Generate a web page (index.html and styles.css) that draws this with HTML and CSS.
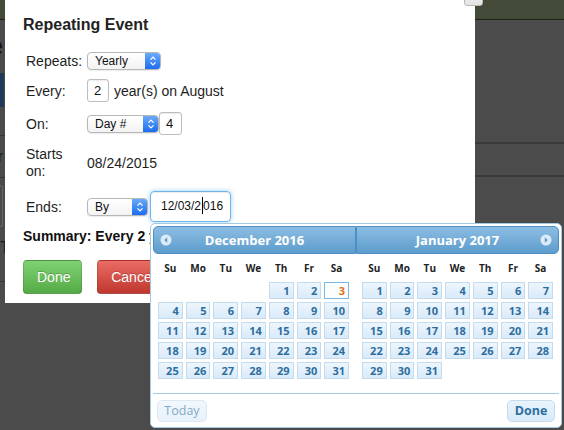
FILE: index.html
```html
<!DOCTYPE html>
<html>
<head>
<meta charset="utf-8">
<title>Repeating Event</title>
<link rel="stylesheet" href="styles.css">
</head>
<body>
<div class="page">
  <div class="lside">
    <div class="bar"></div>
    <div class="l-title"><span>Schedule</span></div>
    <div class="l-blue"></div>
    <div class="l-r1"></div>
    <div class="l-r2"><span>Filter</span></div>
    <div class="l-box"></div>
    <div class="l-r3"><span>To</span></div>
  </div>
  <div class="rside">
    <div class="bar"></div>
    <div class="r-r1"></div>
    <div class="r-r2"></div>
  </div>
</div>

<div class="dialog">
  <h2 class="title">Repeating Event</h2>
  <div class="form">
    <div class="row r1">
      <span class="lbl">Repeats:</span>
      <div class="sel w-repeats"><span class="txt">Yearly</span><span class="arr"><svg width="8" height="12" viewBox="0 0 8 12"><path d="M1.5 4.6 L4 2.1 L6.5 4.6 M1.5 7.4 L4 9.9 L6.5 7.4" fill="none" stroke="#fff" stroke-width="1.3"/></svg></span></div>
    </div>
    <div class="row r2">
      <span class="lbl">Every:</span>
      <div class="num">2</div>
      <span class="after">year(s) on August</span>
    </div>
    <div class="row r3">
      <span class="lbl">On:</span>
      <div class="sel w-on"><span class="txt">Day #</span><span class="arr"><svg width="8" height="12" viewBox="0 0 8 12"><path d="M1.5 4.6 L4 2.1 L6.5 4.6 M1.5 7.4 L4 9.9 L6.5 7.4" fill="none" stroke="#fff" stroke-width="1.3"/></svg></span></div>
      <div class="num num4">4</div>
    </div>
    <div class="row r4">
      <span class="lbl two">Starts<br>on:</span>
      <span class="val">08/24/2015</span>
    </div>
    <div class="row r5">
      <span class="lbl">Ends:</span>
      <div class="sel w-ends"><span class="txt">By</span><span class="arr"><svg width="8" height="12" viewBox="0 0 8 12"><path d="M1.5 4.6 L4 2.1 L6.5 4.6 M1.5 7.4 L4 9.9 L6.5 7.4" fill="none" stroke="#fff" stroke-width="1.3"/></svg></span></div>
      <div class="date-input">12/03/2<span class="caret"></span>016</div>
    </div>
  </div>
  <div class="summary">Summary: Every 2 years on August 4, until 12/03/2016</div>
  <div class="buttons">
    <button class="btn done-btn">Done</button>
    <button class="btn cancel-btn">Cancel</button>
  </div>
</div>

<div class="close-btn"><span>×</span></div>

<div class="dp">
  <div class="groups">
    <div class="group first">
      <div class="dp-head">
        <span class="nav prev"><svg width="12" height="12" viewBox="0 0 12 12"><circle cx="6" cy="6" r="5.5" fill="#dcebf7"/><path d="M7.2 3.3 L4.2 6 L7.2 8.7 Z" fill="#5b9bcc"/></svg></span>
        <span class="month">December 2016</span>
        <span class="nav"></span>
      </div>
      <div class="dow"><span>Su</span><span>Mo</span><span>Tu</span><span>We</span><span>Th</span><span>Fr</span><span>Sa</span></div>
      <div class="days">
        <span class="e"></span><span class="e"></span><span class="e"></span><span class="e"></span>
        <span class="d">1</span><span class="d">2</span><span class="d active">3</span>
        <span class="d">4</span><span class="d">5</span><span class="d">6</span><span class="d">7</span><span class="d">8</span><span class="d">9</span><span class="d">10</span>
        <span class="d">11</span><span class="d">12</span><span class="d">13</span><span class="d">14</span><span class="d">15</span><span class="d">16</span><span class="d">17</span>
        <span class="d">18</span><span class="d">19</span><span class="d">20</span><span class="d">21</span><span class="d">22</span><span class="d">23</span><span class="d">24</span>
        <span class="d">25</span><span class="d">26</span><span class="d">27</span><span class="d">28</span><span class="d">29</span><span class="d">30</span><span class="d">31</span>
      </div>
    </div>
    <div class="group last">
      <div class="dp-head">
        <span class="nav"></span>
        <span class="month">January 2017</span>
        <span class="nav next"><svg width="12" height="12" viewBox="0 0 12 12"><circle cx="6" cy="6" r="5.5" fill="#dcebf7"/><path d="M4.8 3.3 L7.8 6 L4.8 8.7 Z" fill="#5b9bcc"/></svg></span>
      </div>
      <div class="dow"><span>Su</span><span>Mo</span><span>Tu</span><span>We</span><span>Th</span><span>Fr</span><span>Sa</span></div>
      <div class="days">
        <span class="d">1</span><span class="d">2</span><span class="d">3</span><span class="d">4</span><span class="d">5</span><span class="d">6</span><span class="d">7</span>
        <span class="d">8</span><span class="d">9</span><span class="d">10</span><span class="d">11</span><span class="d">12</span><span class="d">13</span><span class="d">14</span>
        <span class="d">15</span><span class="d">16</span><span class="d">17</span><span class="d">18</span><span class="d">19</span><span class="d">20</span><span class="d">21</span>
        <span class="d">22</span><span class="d">23</span><span class="d">24</span><span class="d">25</span><span class="d">26</span><span class="d">27</span><span class="d">28</span>
        <span class="d">29</span><span class="d">30</span><span class="d">31</span>
      </div>
    </div>
  </div>
  <div class="pane">
    <button class="dbtn today">Today</button>
    <button class="dbtn dp-done">Done</button>
  </div>
</div>
</body>
</html>
```

FILE: styles.css
```css
* { box-sizing: border-box; margin: 0; padding: 0; }
html, body { width: 564px; height: 430px; overflow: hidden; }
body {
  background: #4b4b4b;
  font-family: "Liberation Sans", Arial, sans-serif;
  position: relative;
  color: #1e1e1e;
}

/* background page (dimmed) */
.page { display: flex; height: 430px; }
.lside { width: 5px; overflow: hidden; display: flex; flex-direction: column; flex: none; }
.rside { flex: 1; display: flex; flex-direction: column; }
.bar { height: 20px; flex: none; background: #434a37; border-bottom: 1px solid #1e2314; }
.l-title {
  height: 53px; padding-top: 11px; padding-right: 2px;
  display: flex; justify-content: flex-end;
  font-weight: bold; font-size: 26px; line-height: 30px; color: #161616; white-space: nowrap;
}
.l-blue { height: 34px; width: 4px; background: #213a58; }
.l-r1 { height: 29px; border-bottom: 1px solid #363636; }
.l-r2 {
  height: 42px; border-bottom: 1px solid #363636;
  display: flex; justify-content: flex-end; align-items: center; padding-right: 2px;
  font-size: 16px; color: #1c1c1c; white-space: nowrap;
}
.l-box { margin-top: 7px; height: 42px; width: 3px; border: 1px solid #666; border-left: none; border-radius: 0 4px 4px 0; }
.l-r3 {
  height: 55px; border-bottom: 1px solid #363636;
  padding-top: 12px; font-size: 16px; color: #1c1c1c; white-space: nowrap;
}
.r-r1 { height: 124px; border-bottom: 2px solid #3a3a3a; }
.r-r2 { height: 33px; border-bottom: 2px solid #3a3a3a; }

/* dialog */
.dialog {
  position: absolute; left: 5px; top: 0; width: 470px; height: 303px;
  background: #fff; padding: 16px 0 0 18px;
}
.title { font-size: 16px; line-height: 18px; font-weight: bold; color: #222; }
.form { margin-left: 3px; }
.row { display: flex; align-items: center; }
.r1 { margin-top: 18px; height: 18px; }
.r2 { margin-top: 9px; height: 23px; }
.r3 { margin-top: 10px; height: 23px; }
.r4 { margin-top: 11px; height: 34px; }
.r5 { margin-top: 10px; height: 33px; }
.lbl { width: 61px; flex: none; font-size: 14px; line-height: 16px; }
.lbl.two { line-height: 17px; }
.val, .after { font-size: 14px; line-height: 16px; }
.after { margin-left: 5px; }

.sel {
  display: flex; height: 18px; flex: none;
  border: 1px solid #b7b7b7; border-radius: 4px;
  background: linear-gradient(#ffffff, #f3f3f3);
  box-shadow: 0 1px 1px rgba(0,0,0,0.08);
  overflow: hidden; font-size: 12px; color: #111;
}
.sel .txt { flex: 1; padding-left: 7px; line-height: 16px; }
.sel .arr {
  width: 15px; flex: none; display: flex; align-items: center; justify-content: center;
  background: linear-gradient(#6aaaf8, #1c6cf0);
}
.w-repeats { width: 74px; }
.w-on { width: 72px; }
.w-ends { width: 61px; }

.num {
  width: 22px; height: 23px; flex: none;
  border: 1px solid #bdbdbd; border-radius: 3px;
  box-shadow: inset 0 1px 1px rgba(0,0,0,0.08);
  font-size: 13px; line-height: 21px; padding-left: 6px; color: #111;
}
.num4 { width: 23px; }

.date-input {
  margin-left: 2px; width: 81px; height: 31px; flex: none;
  border: 1px solid rgba(82,168,236,0.85); border-radius: 4px;
  box-shadow: inset 0 1px 1px rgba(0,0,0,0.075), 0 0 5px rgba(82,168,236,0.55);
  font-size: 12px; line-height: 29px; padding-left: 10px; color: #111; white-space: nowrap;
}
.caret { display: inline-block; width: 1px; height: 17px; background: #000; vertical-align: -4px; margin: 0 0 0 1px; }

.summary {
  margin-top: 5px; font-size: 14px; line-height: 16px; font-weight: bold; color: #111; white-space: nowrap;
}
.buttons { margin-top: 16px; display: flex; gap: 15px; }
.btn {
  height: 34px; padding: 0 13px; border-radius: 4px;
  font-family: "Liberation Sans", Arial, sans-serif; font-size: 14px; color: #fff;
  text-shadow: 0 -1px 0 rgba(0,0,0,0.2);
  border: 1px solid rgba(0,0,0,0.12); border-bottom-color: rgba(0,0,0,0.25);
}
.done-btn { width: 59px; background: linear-gradient(#7fd172, #55ab47); }
.cancel-btn { width: 72px; background: linear-gradient(#ea6c65, #bf372e); }

.close-btn {
  position: absolute; left: 464px; top: -13px; width: 19px; height: 19px;
  background: linear-gradient(#f6f6f6, #e4e4e4); border: 1px solid #b9b9b9; border-radius: 3px;
  display: flex; justify-content: center; font-size: 12px; line-height: 12px; color: #666;
}

/* datepicker */
.dp {
  position: absolute; left: 150px; top: 223px; width: 412px; height: 205px; z-index: 2;
  background: #fff; border: 1px solid #a6c9e2; border-radius: 5px; padding: 2px;
  font-family: "Open Sans", "DejaVu Sans", sans-serif;
  display: flex; flex-direction: column;
}
.groups { display: flex; }
.group { width: 203px; }
.dp-head {
  height: 28px; display: grid; grid-template-columns: 1fr auto 1fr; align-items: center;
  background: linear-gradient(#8cbde3, #5d9ccc);
  border: 1px solid #4c8fc7; color: #fff; font-weight: bold; font-size: 13px;
}
.first .dp-head { border-radius: 5px 0 0 5px; }
.last .dp-head { border-radius: 0 5px 5px 0; }
.nav { display: flex; height: 12px; }
.nav.prev { padding-left: 6px; }
.nav.next { justify-content: flex-end; padding-right: 6px; }
.month { line-height: 18px; }

.dow, .days { display: grid; grid-template-columns: repeat(7, 1fr); column-gap: 3px; }
.first .dow, .first .days { margin-left: 5px; margin-right: 7px; }
.last .dow, .last .days { margin-left: 6px; margin-right: 6px; }
.dow { margin-top: 7px; height: 14px; font-size: 10px; line-height: 14px; font-weight: bold; color: #222; text-align: center; }
.days { margin-top: 7px; row-gap: 3px; grid-auto-rows: 17px; }
.d {
  border: 1px solid #c5dbec; background: linear-gradient(#edf6fd, #d9eafa);
  color: #2e6e9e; font-weight: bold; font-size: 11px; line-height: 15px;
  text-align: right; padding-right: 3px;
}
.d.active { background: #fbfdfe; border-color: #79b7e7; color: #e17009; }

.pane {
  margin-top: 14px; border-top: 1px solid #a6c9e2;
  display: flex; justify-content: space-between; padding: 6px 4px 0;
}
.dbtn {
  height: 22px; border: 1px solid #c5dbec; border-radius: 5px;
  background: linear-gradient(#e9f3fc, #d9eafa);
  color: #2e6e9e; font-family: "Open Sans", "DejaVu Sans", sans-serif; font-size: 12.5px; line-height: 20px;
}
.today { width: 50px; font-weight: normal; opacity: 0.6; }
.dp-done { width: 48px; font-weight: bold; }
```
